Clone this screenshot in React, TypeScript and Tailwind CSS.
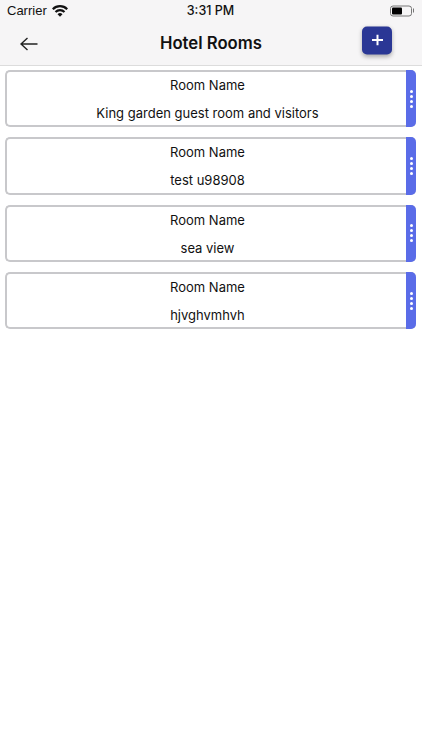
const rooms = ["King garden guest room and visitors", "test u98908", "sea view", "hjvghvmhvh"];

function RoomCard({ name }: { name: string }) {
  return (
    <div className="flex h-[57.3px] rounded-[5px] border-2 border-r-0 border-[#c8c8cb] bg-white">
      <div className="flex flex-1 flex-col items-center pl-[2px] pt-[4px] text-[13px] leading-[18px] text-[#111]">
        <span>Room Name</span>
        <span className="mt-[10px]">{name}</span>
      </div>
      <div className="-my-[2px] flex w-[10px] flex-col items-center justify-center gap-[2px] rounded-r-[5px] bg-[#5a6ce8]">
        <span className="h-[3px] w-[3px] rounded-full bg-white" />
        <span className="h-[3px] w-[3px] rounded-full bg-white" />
        <span className="h-[3px] w-[3px] rounded-full bg-white" />
        <span className="h-[3px] w-[3px] rounded-full bg-white" />
      </div>
    </div>
  );
}

export default function App() {
  return (
    <div className="h-[750px] w-[422px] overflow-hidden bg-white font-['Inter',sans-serif]">
      <div className="h-[66px] border-b border-[#dcdcdc] bg-[#f6f5f6]">
        <div className="grid h-[22px] grid-cols-[1fr_auto_1fr] items-center pl-[7px] pr-[8px] text-[#111]">
          <div className="flex items-center gap-[5px]">
            <span className="font-['Liberation_Sans',sans-serif] text-[13px]">Carrier</span>
            <svg width="16" height="12" viewBox="0 0 16 12" fill="none" stroke="#111" strokeWidth="2.2">
              <path d="M.8 4.2a10.2 10.2 0 0 1 14.4 0" />
              <path d="M3.5 7a6.4 6.4 0 0 1 9 0" />
              <path d="M8 11.8 5.5 9.2a3.5 3.5 0 0 1 5 0Z" fill="#111" stroke="none" />
            </svg>
          </div>
          <span className="pt-[1px] text-[12.5px] font-medium">3:31 PM</span>
          <div className="-translate-y-[0.5px] flex items-center justify-end">
            <div className="h-[11px] w-[22px] rounded-[3px] border border-[#777] p-[1px]">
              <div className="h-full w-[10px] rounded-[1px] bg-black" />
            </div>
            <div className="ml-[1px] h-[4px] w-[1px] bg-[#777]" />
          </div>
        </div>
        <div className="grid h-[43px] grid-cols-[1fr_auto_1fr] items-center px-[20px]">
          <svg width="18" height="14" viewBox="0 0 18 14" fill="none" stroke="#222" strokeWidth="1.4">
            <path d="M17.5 7H1M7.5 1 1 7l6.5 6" />
          </svg>
          <h1 className="text-center text-[16.7px] font-semibold text-[#111]">Hotel Rooms</h1>
          <div className="flex justify-end pr-[10px]">
            <button className="flex h-[28px] w-[30px] -translate-y-[3.5px] items-center justify-center rounded-[5px] bg-[#2a3795] shadow-[0_2px_4px_rgba(0,0,0,0.3)]">
              <svg width="11" height="11" viewBox="0 0 11 11" stroke="white" strokeWidth="2">
                <path d="M5.5 0v11M0 5.5h11" />
              </svg>
            </button>
          </div>
        </div>
      </div>
      <div className="flex flex-col gap-[10px] pl-[5px] pr-[6px] pt-[4px]">
        {rooms.map((r) => (
          <RoomCard key={r} name={r} />
        ))}
      </div>
    </div>
  );
}
